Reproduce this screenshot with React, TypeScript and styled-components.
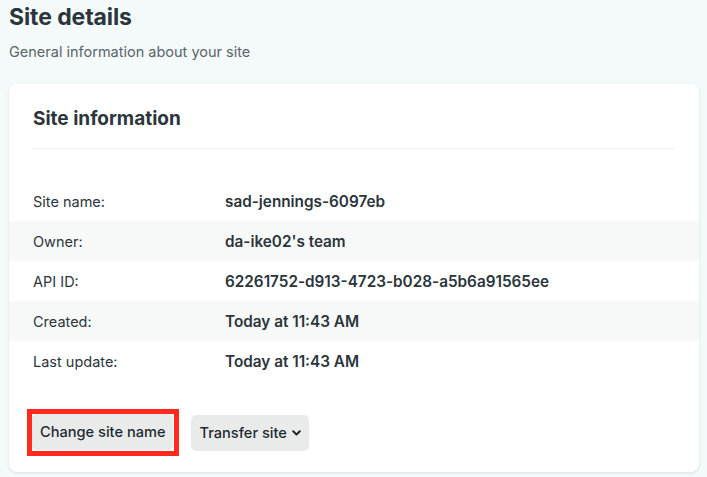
import { FC, ReactNode } from 'react';
import styled, { createGlobalStyle } from 'styled-components';

const FONT = `Inter, "Noto Sans", "Liberation Sans", sans-serif`;
const INK = '#2b353b';
const MUTED = '#5b656b';

const GlobalStyle = createGlobalStyle`
  html, body {
    margin: 0;
    padding: 0;
    background: #f4f9f9;
    font-family: ${FONT};
    color: ${INK};
  }
`;

const Page = styled.main`
  padding: 3px 8px 5px 9px;
  box-sizing: border-box;
  width: 707px;
  height: 477px;
  overflow: hidden;
`;

const PageTitle = styled.h1`
  margin: 0;
  font-size: 23px;
  font-weight: 700;
  line-height: 28px;
  letter-spacing: -0.1px;
`;

const PageSubtitle = styled.p`
  margin: 12px 0 0;
  font-size: 14.5px;
  line-height: 18px;
  color: ${MUTED};
`;

const Card = styled.section`
  margin-top: 23px;
  background: #fff;
  border-radius: 8px;
  box-shadow: 0 1px 3px rgba(30, 60, 70, 0.12);
  padding: 0 0 16px;
`;

const CardHeader = styled.div`
  margin: 0 24px;
  padding: 24px 0 18px;
  border-bottom: 1px solid #eef0f1;
`;

const CardTitle = styled.h2`
  margin: 0;
  font-size: 19px;
  font-weight: 700;
  line-height: 22px;
`;

const InfoList = styled.dl`
  margin: 32px 0 0;
  padding: 0;
`;

const InfoRow = styled.div`
  display: grid;
  grid-template-columns: 192px 1fr;
  align-items: center;
  height: 40px;
  padding: 0 24px;
  &:nth-child(even) {
    background: #f7f9f9;
  }
`;

const Label = styled.dt`
  margin: 0;
  font-size: 14.5px;
  color: ${INK};
`;

const Value = styled.dd`
  margin: 0;
  font-size: 15.3px;
  font-weight: 600;
  color: ${INK};
`;

const Actions = styled.div`
  display: flex;
  align-items: center;
  gap: 12px;
  margin-top: 28px;
  padding: 0 18px;
`;

const Highlight = styled.span`
  display: inline-flex;
  padding: 0 1px 1px 0;
  border: 5px solid #ff2a1c;
`;

const Button = styled.button`
  display: inline-flex;
  align-items: center;
  gap: 5px;
  height: 36px;
  padding: 0 8px;
  border: none;
  border-radius: 5px;
  background: #e9ebeb;
  color: #1f2a30;
  font-family: ${FONT};
  font-size: 14.6px;
  font-weight: 500;
  cursor: pointer;
`;

const Chevron: FC = () => (
  <svg width="9" height="6" viewBox="0 0 9 6" aria-hidden>
    <path d="M1.2 1.2 L4.5 4.5 L7.8 1.2" fill="none" stroke="currentColor" strokeWidth="2" strokeLinecap="round" strokeLinejoin="round" />
  </svg>
);

const Highlighted: FC<{ children: ReactNode }> = ({ children }) => <Highlight>{children}</Highlight>;

const rows: [string, string][] = [
  ['Site name:', 'sad-jennings-6097eb'],
  ['Owner:', "da-ike02's team"],
  ['API ID:', '62261752-d913-4723-b028-a5b6a91565ee'],
  ['Created:', 'Today at 11:43 AM'],
  ['Last update:', 'Today at 11:43 AM'],
];

const App: FC = () => (
  <>
    <GlobalStyle />
    <Page>
      <PageTitle>Site details</PageTitle>
      <PageSubtitle>General information about your site</PageSubtitle>
      <Card>
        <CardHeader>
          <CardTitle>Site information</CardTitle>
        </CardHeader>
        <InfoList>
          {rows.map(([label, value]) => (
            <InfoRow key={label}>
              <Label>{label}</Label>
              <Value>{value}</Value>
            </InfoRow>
          ))}
        </InfoList>
        <Actions>
          <Highlighted>
            <Button>Change site name</Button>
          </Highlighted>
          <Button>
            Transfer site <Chevron />
          </Button>
        </Actions>
      </Card>
    </Page>
  </>
);

export default App;
